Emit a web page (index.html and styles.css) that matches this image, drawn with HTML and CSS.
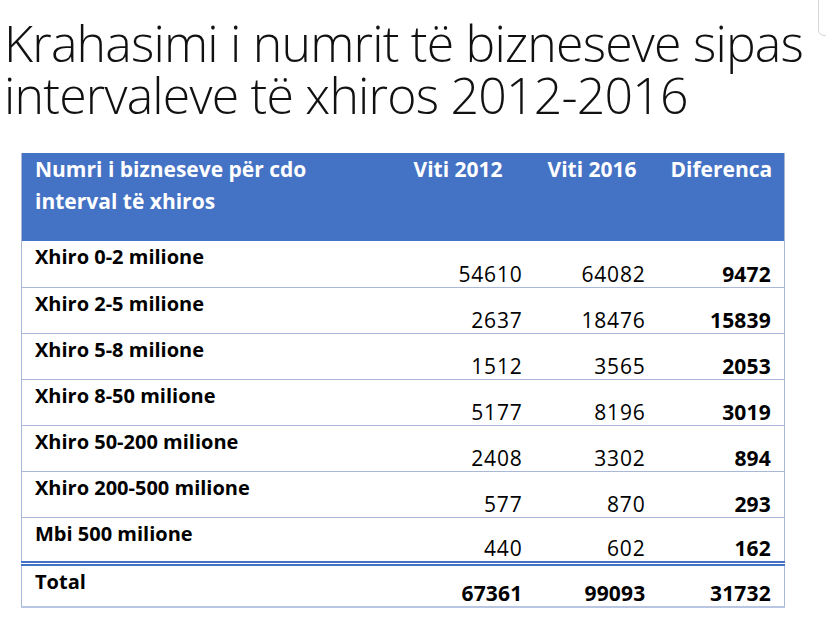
FILE: index.html
```html
<!DOCTYPE html>
<html>
<head>
<meta charset="utf-8">
<link rel="stylesheet" href="styles.css">
</head>
<body>
<div class="slide">
  <h1 class="title">Krahasimi i numrit të bizneseve sipas intervaleve të xhiros 2012-2016</h1>
  <div class="tab-edge"></div>
  <table class="data">
    <thead>
      <tr>
        <th class="c1">Numri i bizneseve për cdo interval të xhiros</th>
        <th class="c2">Viti 2012</th>
        <th class="c3">Viti 2016</th>
        <th class="c4">Diferenca</th>
      </tr>
    </thead>
    <tbody>
      <tr><td class="lbl">Xhiro 0-2 milione</td><td class="num">54610</td><td class="num">64082</td><td class="num b">9472</td></tr>
      <tr><td class="lbl">Xhiro 2-5 milione</td><td class="num">2637</td><td class="num">18476</td><td class="num b">15839</td></tr>
      <tr><td class="lbl">Xhiro 5-8 milione</td><td class="num">1512</td><td class="num">3565</td><td class="num b">2053</td></tr>
      <tr><td class="lbl">Xhiro 8-50 milione</td><td class="num">5177</td><td class="num">8196</td><td class="num b">3019</td></tr>
      <tr><td class="lbl">Xhiro 50-200 milione</td><td class="num">2408</td><td class="num">3302</td><td class="num b">894</td></tr>
      <tr><td class="lbl">Xhiro 200-500 milione</td><td class="num">577</td><td class="num">870</td><td class="num b">293</td></tr>
      <tr class="last"><td class="lbl">Mbi 500 milione</td><td class="num">440</td><td class="num">602</td><td class="num b">162</td></tr>
      <tr class="total"><td class="lbl">Total</td><td class="num b">67361</td><td class="num b">99093</td><td class="num b">31732</td></tr>
    </tbody>
  </table>
</div>
</body>
</html>
```
FILE: styles.css
```css
html, body {
  margin: 0;
  padding: 0;
  background: #ffffff;
}
.slide {
  position: relative;
  width: 826px;
  height: 638px;
  overflow: hidden;
}
.title {
  margin: 0;
  padding: 17px 0 0 4px;
  width: 815px;
  font-family: "Open Sans", sans-serif;
  font-weight: 300;
  font-size: 50px;
  line-height: 52px;
  color: #111;
  letter-spacing: -0.8px;
}
.tab-edge {
  position: absolute;
  left: 818px;
  top: -6px;
  width: 20px;
  height: 40px;
  border: 1px solid #d6d6d6;
  border-radius: 6px;
}
.data {
  margin: 32px 0 0 21px;
  width: 763px;
  border-collapse: collapse;
  table-layout: fixed;
  font-family: "Open Sans", sans-serif;
  color: #000;
  border-left: 1px solid #a9b8d9;
  border-right: 1px solid #a9b8d9;
}
.data th {
  background: #4472c4;
  color: #ffffff;
  font-weight: 700;
  font-size: 21px;
  text-align: left;
  vertical-align: top;
  height: 88px;
  padding: 0 8px 0 12px;
  line-height: 32px;
  box-sizing: border-box;
}
.data th.c1 { width: 382px; padding-left: 13px; padding-right: 10px; }
.data th.c2 { width: 132px; padding-left: 10px; }
.data th.c3 { width: 123px; padding-left: 12px; }
.data th.c4 { width: 126px; padding-left: 12px; }
.data td {
  height: 46px;
  padding: 0 13px;
  border-bottom: 1px solid #a9b8d9;
  box-sizing: border-box;
  line-height: 24px;
}
.data td.lbl {
  font-weight: 700;
  font-size: 20px;
  vertical-align: top;
  padding-top: 4px;
  padding-left: 13px;
  white-space: nowrap;
}
.data td.num {
  text-align: right;
  vertical-align: bottom;
  padding-bottom: 1px;
  font-weight: 400;
  font-size: 21px;
  letter-spacing: 0.8px;
}
.data td.b { font-weight: 700; letter-spacing: 0.2px; }
.data tr.last td {
  height: 46px;
  border-bottom: 5px double #4472c4;
}
.data tr.total td {
  height: 44px;
  border-bottom: 2px solid #b9c6e2;
}
```
